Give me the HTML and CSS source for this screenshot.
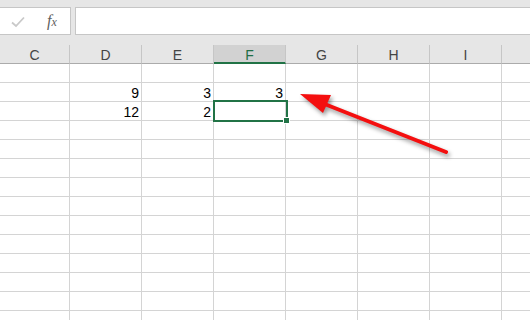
FILE: index.html
```html
<!DOCTYPE html>
<html lang="ja">
<head>
  <meta charset="UTF-8">
  <title>Sheet</title>
  <link rel="stylesheet" href="styles.css">
</head>
<body>

  <!-- formula bar -->
  <div class="formula-bar">
    <div class="name-tools">
      <svg class="check" width="14" height="12" viewBox="0 0 14 12">
        <path d="M1 6.5 L5 10 L13 1.5" fill="none" stroke="#c9c9c9" stroke-width="1.8"/>
      </svg>
      <span class="fx">f<i>x</i></span>
    </div>
    <div class="formula-input"></div>
  </div>

  <!-- sheet -->
  <div class="sheet-wrap">
    <div class="sheet">
      <div class="col-head">C</div>
      <div class="col-head">D</div>
      <div class="col-head">E</div>
      <div class="col-head active">F</div>
      <div class="col-head">G</div>
      <div class="col-head">H</div>
      <div class="col-head">I</div>
      <div class="col-head"></div>
    </div>
  </div>

  <svg class="arrow" width="530" height="320" viewBox="0 0 530 320">
    <line x1="446" y1="152" x2="322" y2="103" stroke="#f40f0f" stroke-width="4" stroke-linecap="round"/>
    <polygon points="300,94 323,113 331,95" fill="#f40f0f"/>
  </svg>

  <script>
    // riempie la griglia
    const data = {
      '1,1': '9', '1,2': '3', '1,3': '3',
      '2,1': '12', '2,2': '2'
    };
    const sheet = document.querySelector('.sheet');
    for (let r = 0; r < 14; r++) {
      for (let c = 0; c < 8; c++) {
        const cell = document.createElement('div');
        cell.className = 'cell';
        cell.textContent = data[r + ',' + c] || '';
        if (r === 2 && c === 3) {
          const sel = document.createElement('div');
          sel.className = 'selection';
          cell.appendChild(sel);
        }
        sheet.appendChild(cell);
      }
    }
  </script>

</body>
</html>
```

FILE: styles.css
```css
/* base */
html, body {
  margin: 0; padding: 0;
  width: 530px; height: 320px;
  overflow: hidden;
  background: #fff;
  font-family: 'Liberation Sans', Arial, sans-serif;
  color: #000;
}

/* formula bar */
.formula-bar {
  display: flex; gap: 4px;
  background: #e6e6e6;
  padding: 7px 0 10px;
  height: 28px;
}
.name-tools {
  width: 72px; height: 28px;
  margin-left: -1px;
  box-sizing: border-box;
  background: #fff; border: 1px solid #c6c6c6;
  display: flex; align-items: center;
  padding-left: 11px;
}
.check { margin-top: 1px; }
.fx {
  margin-left: 22px;
  font-family: 'Liberation Serif', serif;
  font-style: italic; font-size: 16px;
  color: #5f5f5f;
}
.fx i { font-size: 12px; }
.formula-input {
  flex: 1; height: 28px;
  box-sizing: border-box;
  background: #fff; border: 1px solid #c6c6c6;
  border-right: none;
}

/* sheet grid */
.sheet-wrap { width: 530px; overflow: hidden; }
.sheet {
  display: grid;
  grid-template-columns: 70px repeat(7, 72px);
  width: 574px;
}
.col-head {
  height: 19px; box-sizing: border-box;
  padding-top: 3px; line-height: 15px;
  font-size: 14px; text-align: center; color: #444;
  background: #e6e6e6;
  border-right: 1px solid #c6c6c6;
  border-bottom: 1px solid #ababab;
  overflow: hidden;
}
.col-head.active {
  background: #d2d2d2; color: #1f6e45;
  border-bottom: 2px solid #217346;
}
.cell {
  position: relative;
  height: 19px; box-sizing: border-box;
  padding: 1px 2px 0; line-height: 18px;
  font-size: 14px; text-align: right;
  border-right: 1px solid #d4d4d4;
  border-bottom: 1px solid #d4d4d4;
}

/* active cell */
.selection {
  position: absolute; top: -2px; left: -1px; z-index: 2;
  width: 75px; height: 22px; box-sizing: border-box;
  border: 2px solid #217346;
}
.selection::after {
  content: '';
  position: absolute; right: -4px; bottom: -4px;
  width: 5px; height: 5px;
  background: #217346; border: 1px solid #fff;
}

/* annotation */
.arrow {
  position: absolute; top: 0; left: 0; z-index: 3;
  pointer-events: none;
  filter: drop-shadow(2px 3px 2px rgba(0,0,0,0.4));
}
```
